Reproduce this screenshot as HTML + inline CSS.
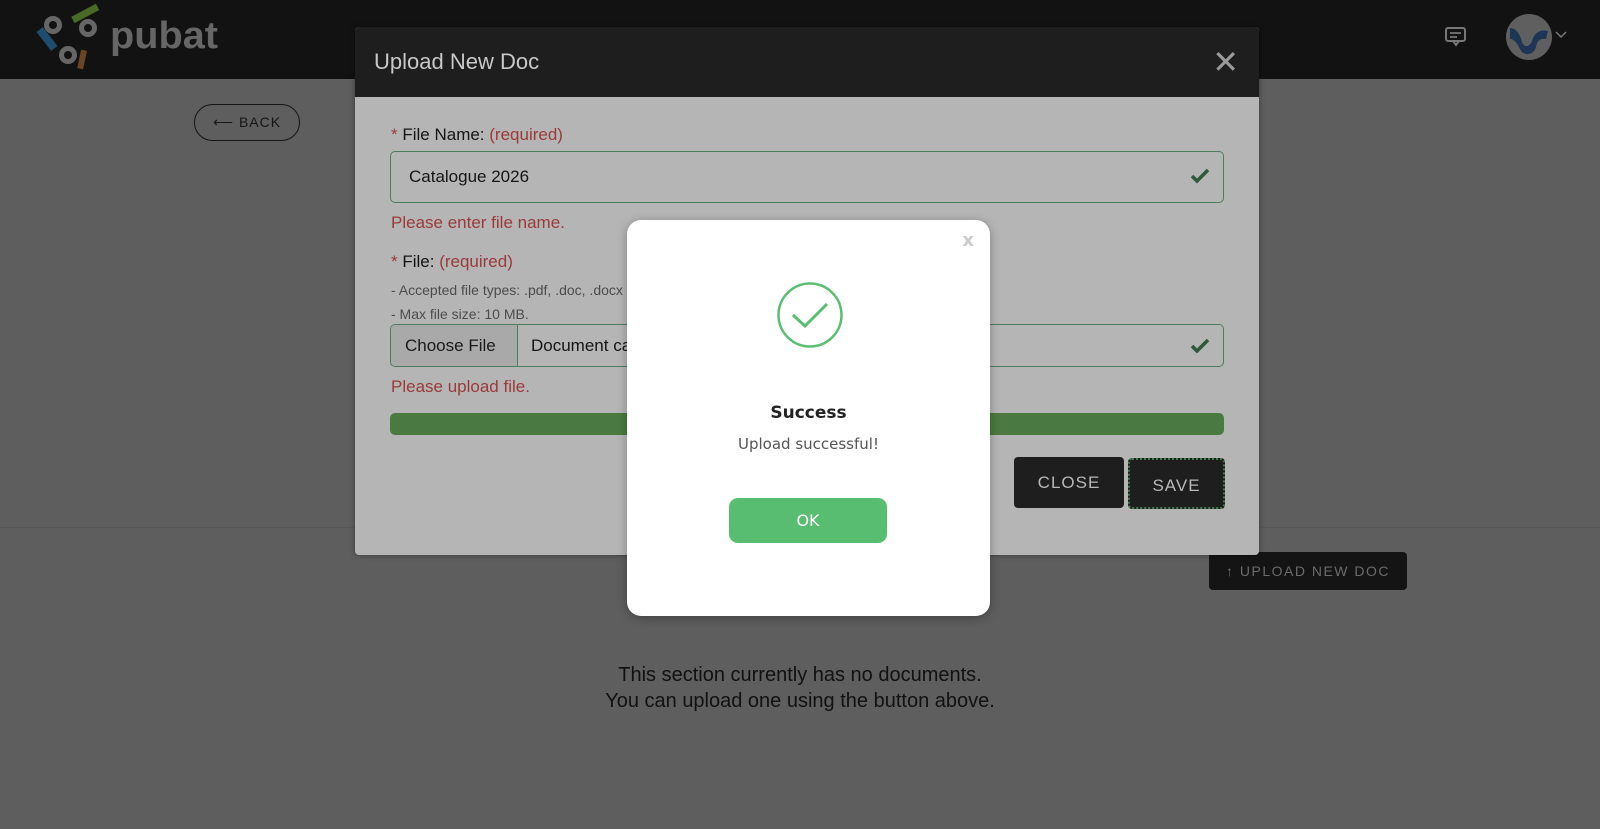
<!DOCTYPE html>
<html><head><meta charset="utf-8"><style>
*{box-sizing:border-box;margin:0;padding:0}
body{width:1600px;height:829px;overflow:hidden;background:#5e5e5e;font-family:"Liberation Sans",sans-serif;position:relative}
.hdr{position:absolute;left:0;top:0;width:1600px;height:79px;background:#121212}
.abs{position:absolute}
.modal{position:absolute;left:355px;top:27px;width:904px;height:528px;background:#b5b5b5;border-radius:4px;overflow:hidden;box-shadow:0 0 6px rgba(0,0,0,.4)}
.mh{height:70px;background:#1e1e1e;color:#c8c8c8;font-size:22px;padding:22px 19px}
.lbl{font-size:17px;color:#151515}
.red{color:#9b3a3a}
.inp{position:absolute;left:35px;width:834px;height:52px;border:1px solid #4f7c5d;border-radius:5px}
.chk{position:absolute;right:12px;top:14px}
.btn{position:absolute;background:#1e1e1e;color:#b8b8b8;font-size:17px;letter-spacing:1px;text-align:center;border-radius:4px}
</style></head><body>
<div class="hdr"></div>
<svg class="abs" style="left:0;top:0" width="240" height="75" viewBox="0 0 240 75">
<rect x="35" y="35" width="24" height="8" fill="#1f4d6e" transform="rotate(52 47 39)"/>
<rect x="71" y="10" width="28" height="7" fill="#4b6a27" transform="rotate(-28 85 13)"/>
<rect x="79" y="50" width="6" height="19" fill="#6a4424" transform="rotate(12 82 60)"/>
<circle cx="53" cy="25" r="6.5" fill="none" stroke="#666" stroke-width="5"/>
<circle cx="88" cy="28" r="6.5" fill="none" stroke="#666" stroke-width="5"/>
<circle cx="68" cy="55" r="6.5" fill="none" stroke="#666" stroke-width="5"/>
<text x="110" y="48" font-family="Liberation Sans" font-weight="bold" font-size="38" textLength="108" lengthAdjust="spacingAndGlyphs" fill="#666">pubat</text>
</svg>
<svg class="abs" style="left:1444px;top:26px" width="24" height="22" viewBox="0 0 24 22"><rect x="2" y="2" width="19" height="13" rx="2" fill="none" stroke="#777" stroke-width="2"/><path d="M9 15l3 4 3-4" fill="none" stroke="#777" stroke-width="2"/><path d="M6 7h11M6 11h7" stroke="#777" stroke-width="1.8"/></svg>
<div class="abs" style="left:1506px;top:14px;width:46px;height:46px;border-radius:50%;background:#5f5f5f;overflow:hidden"><svg width="46" height="46"><path d="M4 14c6 0 10 6 12 14 2 6 8 5 10-1 2-8 8-12 16-10l-2 8c-6-1-9 2-10 8-2 8-12 10-16 2-3-6-6-10-10-10z" fill="#1e3555"/></svg></div>
<svg class="abs" style="left:1555px;top:31px" width="12" height="8"><path d="M1 1l5 5 5-5" fill="none" stroke="#777" stroke-width="1.5"/></svg>
<div class="abs" style="left:194px;top:104px;width:106px;height:37px;border:1.5px solid #161616;border-radius:19px;color:#161616;font-size:14px;letter-spacing:1px;padding:9px 0 0 18px">⟵&nbsp;BACK</div>
<div class="abs" style="left:0;top:527px;width:1600px;height:1px;background:#585858"></div>
<div class="btn" style="left:1209px;top:552px;width:198px;height:38px;background:#141414;color:#6b6b6b;font-size:14px;padding-top:11px;letter-spacing:1.5px">↑ UPLOAD NEW DOC</div>
<div class="abs" style="left:0;top:662px;width:1600px;text-align:center;font-size:20px;color:#111;line-height:26px">This section currently has no documents.<br>You can upload one using the button above.</div>
<div class="modal">
<div class="mh">Upload New Doc<span style="position:absolute;right:20px;top:16px;font-size:32px;color:#9a9a9a;font-weight:300">✕</span></div>
<div class="abs lbl" style="left:36px;top:98px"><span class="red">*</span> File Name: <span class="red">(required)</span></div>
<div class="inp" style="top:124px"><span class="abs lbl" style="left:18px;top:15px">Catalogue 2026</span><svg class="chk" width="22" height="20"><path d="M3 10l5 5 11-11" fill="none" stroke="#2d5a3a" stroke-width="3.5"/></svg></div>
<div class="abs red" style="left:36px;top:186px;font-size:17px">Please enter file name.</div>
<div class="abs lbl" style="left:36px;top:225px"><span class="red">*</span> File: <span class="red">(required)</span></div>
<div class="abs" style="left:36px;top:251px;font-size:14px;color:#4c4c4c;line-height:24px">- Accepted file types: .pdf, .doc, .docx<br>- Max file size: 10 MB.</div>
<div class="inp" style="top:297px;height:43px;overflow:hidden"><div class="abs" style="left:0;top:0;width:127px;height:43px;background:#a9a9a9;border-right:1px solid #4f7c5d;font-size:17px;color:#1a1a1a;padding:11px 0 0 14px">Choose File</div><span class="abs lbl" style="left:140px;top:11px">Document catalogue.pdf</span><svg class="chk" style="top:11px" width="22" height="20"><path d="M3 10l5 5 11-11" fill="none" stroke="#2d5a3a" stroke-width="3.5"/></svg></div>
<div class="abs red" style="left:36px;top:350px;font-size:17px">Please upload file.</div>
<div class="abs" style="left:35px;top:386px;width:834px;height:22px;background:#4a7a41;border-radius:5px"></div>
<div class="btn" style="left:659px;top:430px;width:110px;height:51px;padding-top:16px">CLOSE</div>
<div class="btn" style="left:773px;top:431px;width:97px;height:51px;padding-top:16px;border:2px dotted #3e7d4e">SAVE</div>
</div>
<div class="abs" style="left:627px;top:220px;width:363px;height:396px;background:#fff;border-radius:14px;box-shadow:0 2px 10px rgba(0,0,0,.3);font-family:'DejaVu Sans','Liberation Sans',sans-serif">
<span class="abs" style="right:16px;top:10px;color:#ccc;font-size:18px;font-weight:bold">x</span>
<svg class="abs" style="left:148px;top:60px" width="70" height="70"><circle cx="35" cy="35" r="31.5" fill="none" stroke="#5bbf73" stroke-width="2.5"/><path d="M18 35l12 11 22-22" fill="none" stroke="#5bbf73" stroke-width="3"/></svg>
<div class="abs" style="left:0;width:363px;top:183px;text-align:center;font-size:17px;font-weight:bold;color:#222">Success</div>
<div class="abs" style="left:0;width:363px;top:215px;text-align:center;font-size:15px;color:#555">Upload successful!</div>
<div class="abs" style="left:102px;top:278px;width:158px;height:45px;background:#59bd71;border-radius:9px;color:#fff;font-size:16px;text-align:center;padding-top:13px">OK</div>
</div>
</body></html>
